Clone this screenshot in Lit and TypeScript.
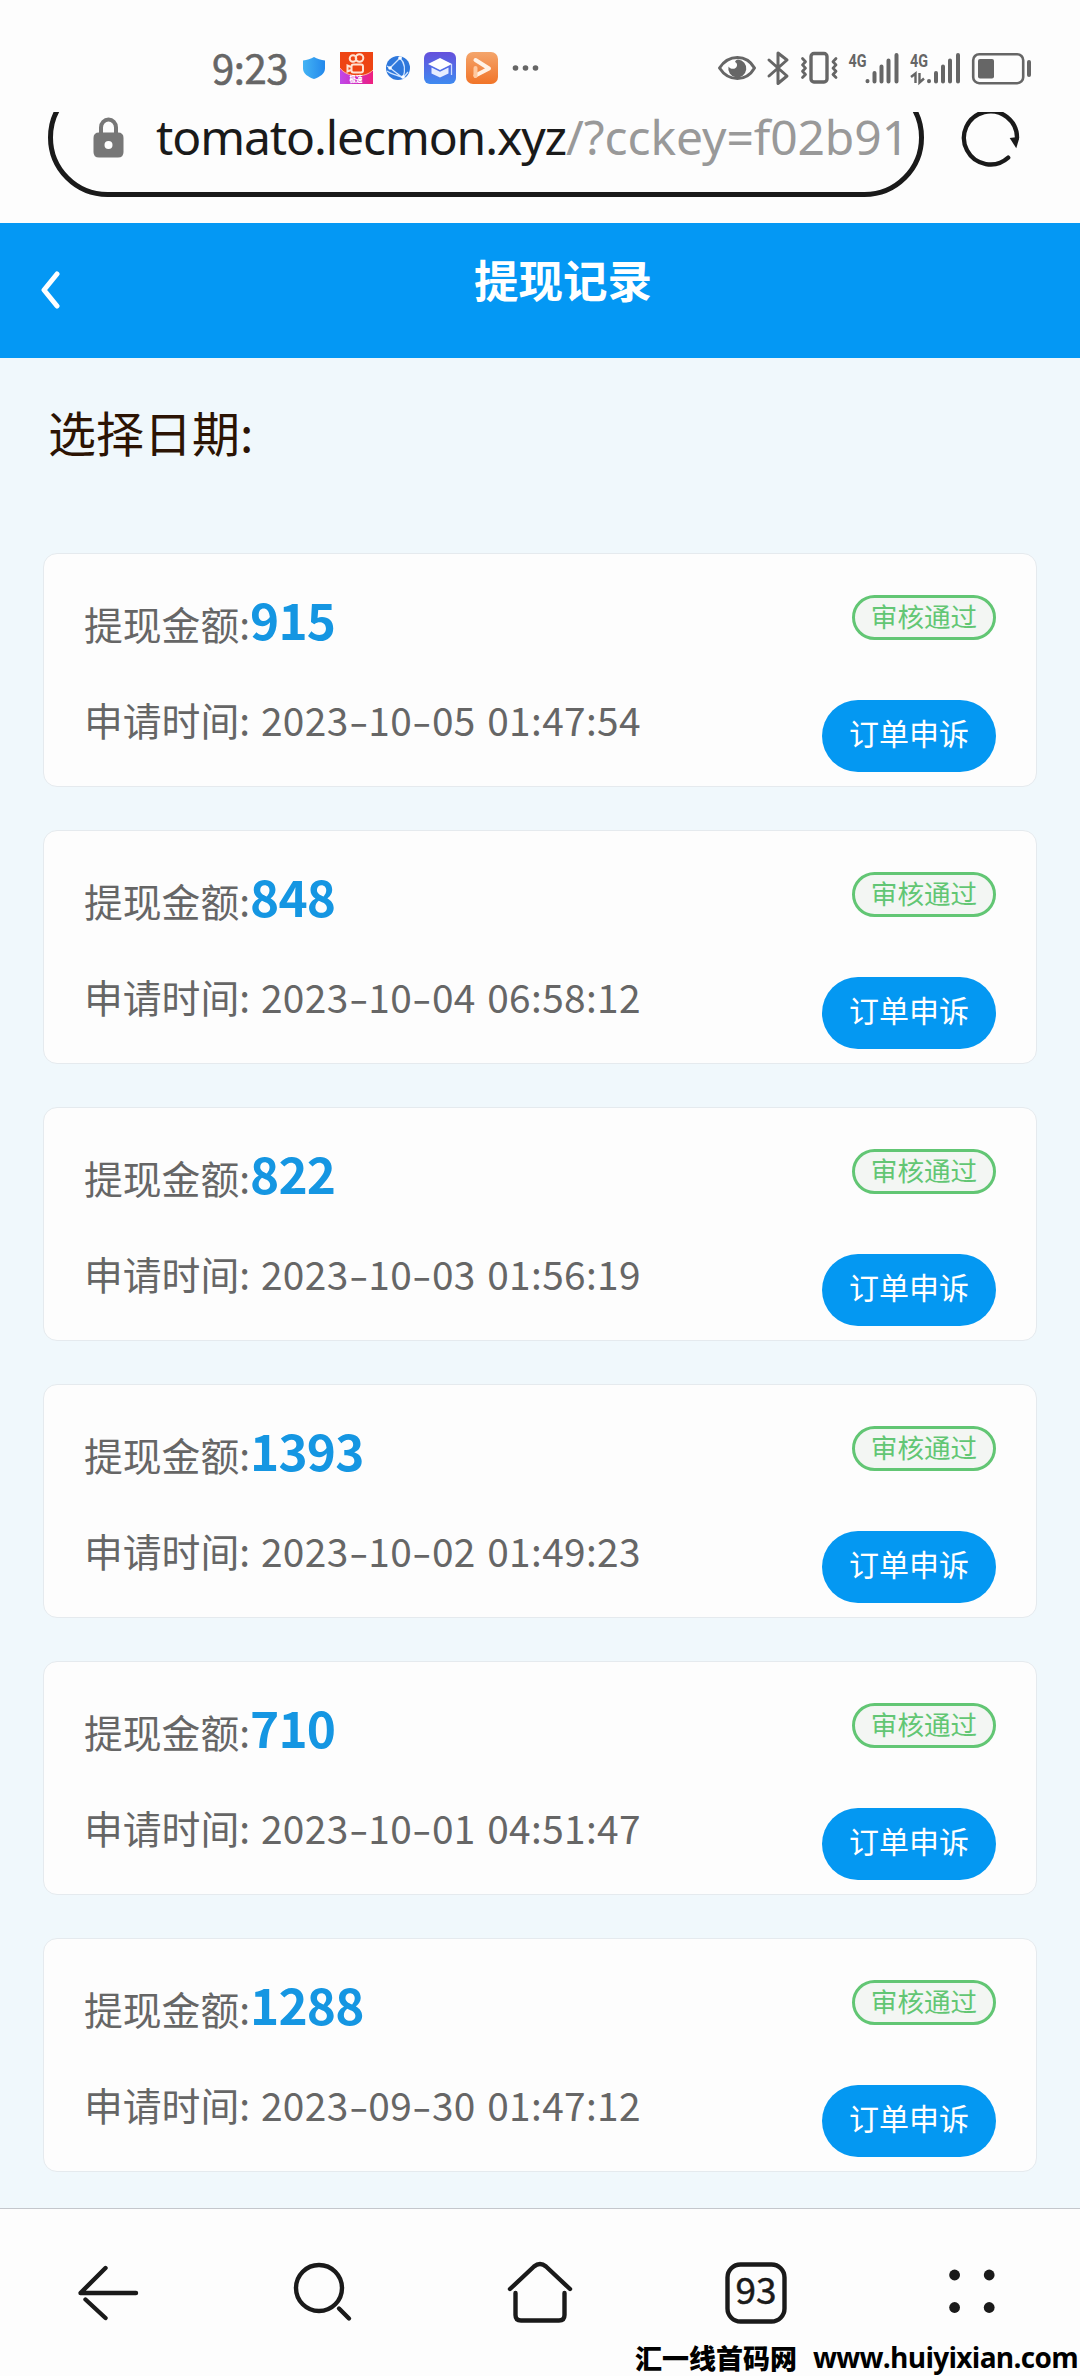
import { LitElement, html, css, svg } from "lit";
import { customElement, property } from "lit/decorators.js";

interface WithdrawRecord {
  amount: string;
  time: string;
}

const RECORDS: WithdrawRecord[] = [
  { amount: "915", time: "2023-10-05 01:47:54" },
  { amount: "848", time: "2023-10-04 06:58:12" },
  { amount: "822", time: "2023-10-03 01:56:19" },
  { amount: "1393", time: "2023-10-02 01:49:23" },
  { amount: "710", time: "2023-10-01 04:51:47" },
  { amount: "1288", time: "2023-09-30 01:47:12" },
];

@customElement("status-bar")
export class StatusBar extends LitElement {
  static styles = css`
    :host {
      display: block;
      height: 112px;
    }
    .bar {
      display: flex;
      justify-content: space-between;
      height: 112px;
      padding: 0 48px 0 212px;
      color: #666;
    }
    .left,
    .right {
      display: flex;
      align-items: center;
      height: 136px;
    }
    .clock {
      width: 85px;
      font: 400 40px/48px "Noto Sans CJK SC", sans-serif;
      letter-spacing: -0.4px;
      -webkit-text-stroke: 0.6px #666;
      white-space: nowrap;
      margin-top: -3px;
    }
    svg {
      display: block;
    }
    .net {
      font: 700 19px "Roboto", sans-serif;
    }
    .mini {
      font: 900 8px "Noto Sans CJK SC", sans-serif;
    }
  `;

  private signal(arrows: boolean) {
    return svg`
      <text class="net" x="0" y="15" textLength="18" lengthAdjust="spacingAndGlyphs" fill="#666">4G</text>
      <g stroke="#666" stroke-width="4" stroke-linecap="round">
        <path d="M19 29v.2M26 21v8.4M33 14.500v15M40 8.500v21M48 3v26.500" />
      </g>
      ${arrows
        ? svg`<path d="M1 25l4.500-3.500v9.500M9.500 21v9.500l4.500-4" fill="none" stroke="#666" stroke-width="2.400"/>`
        : null}
    `;
  }

  render() {
    return html`
      <div class="bar">
        <div class="left">
          <span class="clock">9:23</span>
          <svg width="244" height="36" viewBox="297 50 244 36">
            <defs>
              <linearGradient id="sh" x1="0" x2="1">
                <stop offset="0" stop-color="#44b4f4" />
                <stop offset="1" stop-color="#2388ec" />
              </linearGradient>
              <linearGradient id="cap" x1="0" y1="0" x2="0" y2="1">
                <stop offset="0" stop-color="#6550dc" />
                <stop offset="1" stop-color="#3f8af0" />
              </linearGradient>
              <linearGradient id="pl" x1="0" y1="0" x2="0" y2="1">
                <stop offset="0" stop-color="#f4a56c" />
                <stop offset="1" stop-color="#f17428" />
              </linearGradient>
              <linearGradient id="kw" x1="0" x2="1">
                <stop offset="0" stop-color="#c04ae8" />
                <stop offset=".5" stop-color="#d02cc0" />
                <stop offset="1" stop-color="#f0207c" />
              </linearGradient>
            </defs>
            <path d="M314 57c3 2 7 3 11 3.500v8c0 5-5 8.500-11 10.500-6-2-11-5.500-11-10.500v-8c4-.5 8-1.500 11-3.500z" fill="url(#sh)" />
            <rect x="340" y="52" width="33" height="32" fill="#ee4413" />
            <path d="M340 68c7 10 26 10 33 2v14h-33z" fill="url(#kw)" />
            <path d="M340 68c7 10 26 10 33 2" fill="none" stroke="#ffb4a0" stroke-width="1" />
            <g fill="none" stroke="#ffe4d4" stroke-width="2">
              <circle cx="353" cy="58.500" r="3.300" />
              <circle cx="359.500" cy="58" r="3.800" />
              <rect x="351.500" y="64.500" width="11.500" height="8" rx="2" />
              <path d="M351 67l-3.500-1.500v6l3.500-1.500" />
            </g>
            <text class="mini" x="349.500" y="82.200" textLength="13" lengthAdjust="spacingAndGlyphs" fill="#fff">极速</text>
            <circle cx="398" cy="68" r="12" fill="#2e78dc" />
            <g fill="none" stroke="#cfe4ff" stroke-width="1.300">
              <path d="M400 58L390 68L403 78M400 58C406 64 405 72 403 78M390 68L387 66M400 58L402 56.500M403 78L408 72M387 71c5 4 12 4 16 7" />
            </g>
            <g fill="#fff">
              <circle cx="400" cy="58" r="1.800" />
              <circle cx="390" cy="68" r="1.800" />
              <circle cx="403" cy="77" r="1.800" />
            </g>
            <rect x="424" y="52" width="32" height="32" rx="6" fill="url(#cap)" />
            <path d="M440 58l12 6-12 6-12-6z" fill="#fff" />
            <path d="M431.500 67.500l8.500 4.200 8.500-4.200v6l-8.500 4-8.500-4z" fill="#e6edff" />
            <path d="M451.500 64v11" stroke="#cddcff" stroke-width="1.300" />
            <rect x="466" y="52" width="32" height="32" rx="7" fill="url(#pl)" />
            <path d="M475.500 60l13.500 8.500-13.500 7" fill="none" stroke="#fff2e6" stroke-width="4" stroke-linecap="round" stroke-linejoin="round" />
            <path d="M475.500 68v8" stroke="#ffc9a0" stroke-width="4" stroke-linecap="round" />
            <g fill="#666">
              <circle cx="515.500" cy="68" r="2.800" />
              <circle cx="525.500" cy="68" r="2.800" />
              <circle cx="535.500" cy="68" r="2.800" />
            </g>
          </svg>
        </div>
        <div class="right">
          <svg width="316" height="36" viewBox="716 50 316 36">
            <path d="M719.500 68c9-14 27-14 35 0-8 14-26 14-35 0z" fill="none" stroke="#666" stroke-width="3" stroke-linejoin="round" />
            <path d="M738 59.500a9 9 0 1 1-9.500 7c2 3.500 8 3 8.500-1 .3-2-.8-3.200-2-3.600.5-1.300 1.500-2 3-2.400z" fill="#666" />
            <path d="M769 60l18 16-9 7.500V53l9 7-18 16" fill="none" stroke="#666" stroke-width="3" stroke-linejoin="round" stroke-linecap="round" />
            <rect x="811" y="53.500" width="16" height="28.500" rx="3" fill="none" stroke="#666" stroke-width="3.400" />
            <path d="M802.500 58.500l3 3.200-3 3.200 3 3.200-3 3.200 3 3.200-3 3M836 58.500l-3 3.200 3 3.200-3 3.200 3 3.200-3 3.200 3 3" fill="none" stroke="#666" stroke-width="2.800" stroke-linecap="round" stroke-linejoin="round" />
            <g transform="translate(848.500 52)">${this.signal(false)}</g>
            <g transform="translate(910 52)">${this.signal(true)}</g>
            <rect x="973.200" y="54.200" width="50" height="29" rx="6" fill="none" stroke="#666" stroke-width="2.600" />
            <rect x="978" y="59" width="16" height="19.500" rx="2" fill="#666" />
            <path d="M1029 62v13" stroke="#666" stroke-width="4" stroke-linecap="round" />
          </svg>
        </div>
      </div>
    `;
  }
}

@customElement("address-bar")
export class AddressBar extends LitElement {
  static styles = css`
    :host {
      display: block;
      height: 111px;
    }
    .row {
      display: grid;
      grid-template-columns: 876px 96px;
      height: 111px;
      margin-left: 48px;
    }
    .frame,
    .reload-box {
      grid-row: 1;
      height: 111px;
      overflow: hidden;
    }
    .frame {
      grid-column: 1;
    }
    .pill {
      box-sizing: border-box;
      height: 119px;
      margin-top: -34px;
      border: 5px solid #1a1a1a;
      border-radius: 60px;
    }
    .label {
      grid-column: 1;
      grid-row: 1;
      display: flex;
      align-items: center;
      height: 50px;
      padding-left: 45px;
    }
    .lock {
      display: block;
      flex: none;
      width: 31px;
      height: 41px;
      margin-right: 32px;
    }
    .url {
      font: 400 48px/60px "Noto Sans", sans-serif;
      letter-spacing: -1.1px;
      color: #1a1a1a;
      white-space: nowrap;
    }
    .path {
      color: #999;
      letter-spacing: -0.1px;
    }
    .reload {
      display: block;
      margin: -4px 0 0 37px;
    }
  `;

  render() {
    return html`
      <div class="row">
        <div class="frame"><div class="pill"></div></div>
        <div class="label">
          <svg class="lock" viewBox="0 0 31 41">
            <path d="M8 18v-7.500a7.500 8 0 0 1 15 0V18" fill="none" stroke="#777" stroke-width="4" />
            <path d="M6 15.500h19q5.500 0 5.500 5.500v14q0 5.500-5.500 5.500H6q-5.500 0-5.500-5.500V21q0-5.500 5.500-5.500z" fill="#777" />
            <circle cx="15.500" cy="28" r="4" fill="#fff" />
          </svg>
          <span class="url">tomato.lecmon.xyz<span class="path">/?cckey=f02b91</span></span>
        </div>
        <div class="reload-box">
          <svg class="reload" width="59" height="60" viewBox="0 0 60 60">
            <path d="M48 50A27 27 0 1 1 57 30" fill="none" stroke="#1a1a1a" stroke-width="4.400" stroke-linecap="round" />
            <path d="M49.500 30l8-1 1.500 2-2.800 9.500z" fill="#1a1a1a" />
          </svg>
        </div>
      </div>
    `;
  }
}

@customElement("record-card")
export class RecordCard extends LitElement {
  @property() amount = "";
  @property() time = "";

  static styles = css`
    :host {
      display: block;
    }
    .card {
      box-sizing: border-box;
      display: flex;
      justify-content: space-between;
      height: 234px;
      border: 1px solid #e5eaee;
      border-radius: 14px;
      background: #fdfdfd;
      padding: 0 40px 0 40px;
      color: #666;
    }
    .info {
      display: flex;
      flex-direction: column;
      gap: 40px;
      padding-top: 35px;
      font: 400 38.800px/60px "Noto Sans CJK SC", sans-serif;
      white-space: nowrap;
    }
    .line {
      height: 60px;
      display: flex;
      align-items: baseline;
    }
    .amount {
      font-size: 49.500px;
      font-weight: 700;
      letter-spacing: -0.8px;
      color: #1596e2;
    }
    .time {
      margin-left: 11px;
      letter-spacing: 0.35px;
      word-spacing: 2.5px;
    }
    .dash {
      display: inline-block;
      transform: scaleX(1.45);
      margin: 0 3px;
    }
    .side {
      display: flex;
      flex-direction: column;
      align-items: flex-end;
      padding-top: 41px;
      gap: 60px;
    }
    .badge {
      box-sizing: border-box;
      width: 144px;
      height: 45px;
      border: 3px solid #62c674;
      border-radius: 23px;
      background: #f3f6f3;
      color: #62c674;
      text-align: center;
      font: 400 26.600px/35px "Noto Sans CJK SC", sans-serif;
    }
    .appeal {
      box-sizing: border-box;
      width: 174px;
      height: 72px;
      border: 0;
      border-radius: 36px;
      background: #0498f2;
      color: #fff;
      padding: 0 0 8px;
      text-align: center;
      font: 400 30px/60px "Noto Sans CJK SC", sans-serif;
    }
  `;

  render() {
    return html`
      <div class="card">
        <div class="info">
          <div class="line"><span>提现金额:</span><span class="amount">${this.amount}</span></div>
          <div class="line">
            <span>申请时间:</span
            ><span class="time"
              >${this.time.split("-").map((part, i) => (i ? html`<span class="dash">-</span>${part}` : part))}</span
            >
          </div>
        </div>
        <div class="side">
          <div class="badge">审核通过</div>
          <button class="appeal">订单申诉</button>
        </div>
      </div>
    `;
  }
}

@customElement("browser-nav")
export class BrowserNav extends LitElement {
  static styles = css`
    :host {
      display: block;
    }
    .bar {
      box-sizing: border-box;
      display: grid;
      grid-template-columns: repeat(5, 216px);
      justify-items: center;
      height: 168px;
      border-top: 1px solid #c4c7cc;
      background: #fdfdfd;
      padding-top: 49px;
    }
    svg {
      display: block;
      fill: none;
      stroke: #1a1a1a;
      stroke-width: 4.400;
      stroke-linecap: round;
      stroke-linejoin: round;
    }
    .count {
      fill: #1a1a1a;
      stroke: #1a1a1a;
      stroke-width: 0.5;
      font: 400 37px "Noto Sans CJK SC", sans-serif;
    }
    .dots {
      fill: #1a1a1a;
      stroke: none;
    }
  `;

  render() {
    return html`
      <nav class="bar">
        <svg width="216" height="70" viewBox="0 2258 216 70">
          <path d="M136 2293H80.500L105.500 2268M85.500 2299.500L105.500 2318" />
        </svg>
        <svg width="216" height="70" viewBox="216 2258 216 70">
          <ellipse cx="319" cy="2288" rx="23" ry="23" />
          <path d="M339 2308.500L349 2318.500" />
        </svg>
        <svg width="216" height="70" viewBox="432 2258 216 70">
          <path d="M510 2289L534 2266.500q6-5 12 0L570 2289" />
          <path d="M515.500 2293V2315q0 5.500 5.500 5.500H559q5.500 0 5.500-5.500V2293" />
        </svg>
        <svg width="216" height="70" viewBox="648 2258 216 70">
          <rect x="727.500" y="2264.500" width="57" height="57" rx="13" />
          <text class="count" x="756" y="2304" text-anchor="middle" textLength="41">93</text>
        </svg>
        <svg class="dots" width="216" height="70" viewBox="864 2258 216 70">
          <circle cx="954.600" cy="2275" r="5.400" />
          <circle cx="989.200" cy="2275" r="5.400" />
          <circle cx="954.600" cy="2307.500" r="5.400" />
          <circle cx="989.200" cy="2307.500" r="5.400" />
        </svg>
      </nav>
    `;
  }
}

@customElement("app-root")
export class AppRoot extends LitElement {
  static styles = css`
    :host {
      display: block;
    }
    .screen {
      position: relative;
      display: flex;
      flex-direction: column;
      width: 1080px;
      height: 2376px;
      overflow: hidden;
      background: #fdfdfd;
      font-family: "Noto Sans CJK SC", sans-serif;
    }
    .header {
      display: grid;
      grid-template-columns: 100px 1fr 100px;
      height: 135px;
      background: #0498f4;
      color: #fff;
    }
    .back {
      display: block;
      margin: 48px 0 0 40px;
    }
    .title {
      margin: 0;
      padding-left: 46px;
      text-align: center;
      font-size: 44.500px;
      font-weight: 700;
      line-height: 112px;
    }
    .content {
      flex: 1;
      min-height: 0;
      background: #f0f8fc;
      padding: 0 43px;
    }
    .picker {
      height: 195px;
      padding-left: 5px;
      font-size: 48px;
      line-height: 146px;
      color: #2c1404;
    }
    .list {
      display: flex;
      flex-direction: column;
      gap: 43px;
    }
    .mark {
      position: absolute;
      right: 2px;
      bottom: -2px;
      display: flex;
      gap: 16px;
      color: #000;
      white-space: nowrap;
      line-height: 40px;
    }
    .mark-name {
      font-size: 27px;
      font-weight: 900;
    }
    .mark-site {
      font: 700 28px/38px "Open Sans", sans-serif;
      letter-spacing: -0.7px;
    }
  `;

  render() {
    return html`
      <div class="screen">
        <status-bar></status-bar>
        <address-bar></address-bar>
        <header class="header">
          <svg class="back" width="20" height="38" viewBox="0 0 20 38">
            <path d="M17 3L4 19L17 35" fill="none" stroke="#fff" stroke-width="5" stroke-linecap="round" stroke-linejoin="round" />
          </svg>
          <h1 class="title">提现记录</h1>
        </header>
        <main class="content">
          <div class="picker">选择日期:</div>
          <div class="list">
            ${RECORDS.map((r) => html`<record-card .amount=${r.amount} .time=${r.time}></record-card>`)}
          </div>
        </main>
        <browser-nav></browser-nav>
        <div class="mark">
          <span class="mark-name">汇一线首码网</span>
          <span class="mark-site">www.huiyixian.com</span>
        </div>
      </div>
    `;
  }
}
